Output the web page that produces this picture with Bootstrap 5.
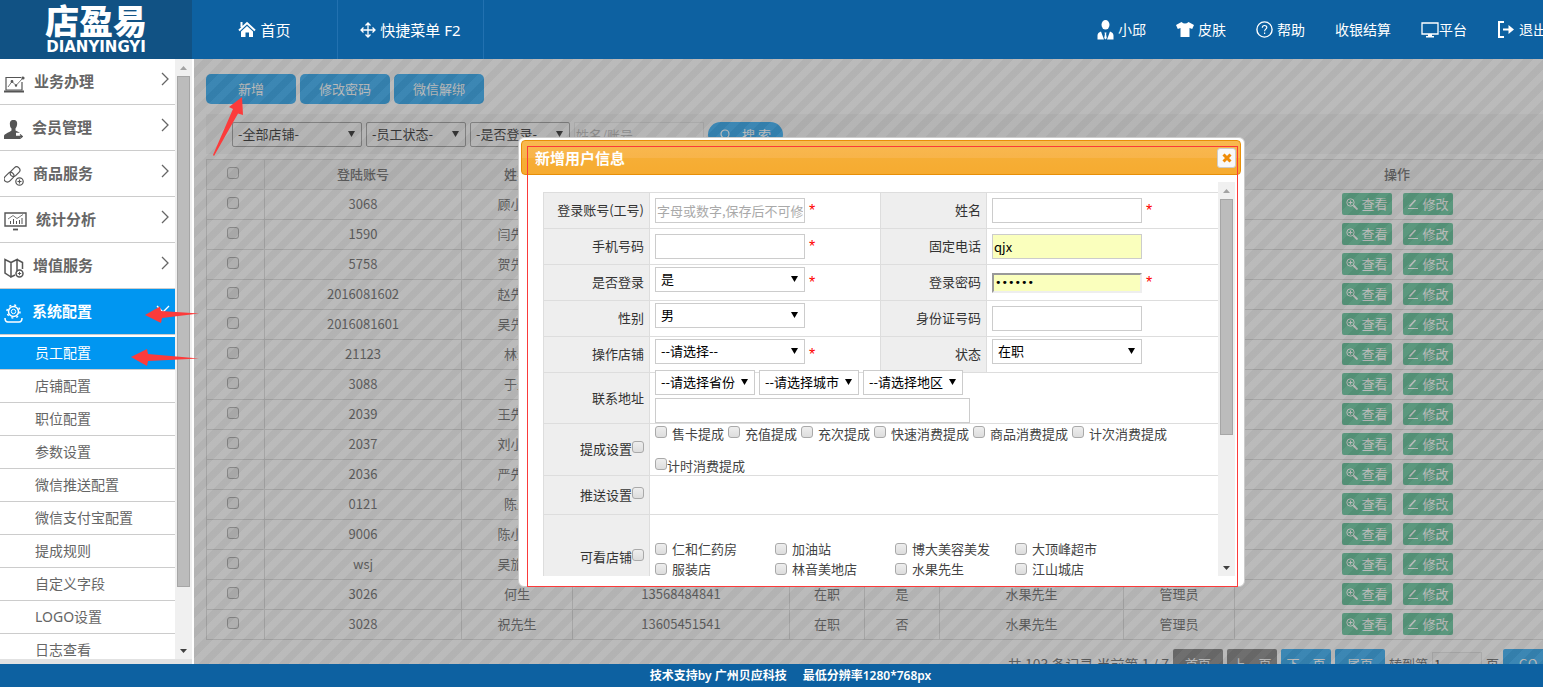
<!DOCTYPE html>
<html lang="zh-CN">
<head>
<meta charset="utf-8">
<meta name="viewport" content="width=device-width, initial-scale=1">
<title>店盈易 - 员工配置</title>
<link href="https://cdn.jsdelivr.net/npm/bootstrap@5.3.0/dist/css/bootstrap.min.css" rel="stylesheet">
<style>
  :root { --brand:#0d61a1; --bright:#0096f1; --line:#ddd; }
  body { font-family:"Noto Sans","Noto Sans CJK SC",sans-serif; font-size:13px; line-height:20px; color:#333; }
  .cjk, input, select, .btn { font-family:"Noto Sans CJK SC",sans-serif; }
  svg { display:block; flex:none; }

  /* header */
  .topbar { height:59px; background:var(--brand); }
  .logo { width:192px; background:#115284; line-height:1; }
  .logo-cn { font:900 34px/40px "Noto Sans CJK SC",sans-serif; }
  .logo-en { font:bold 15px/14px "DejaVu Sans",sans-serif; }
  .topbar a { color:#fff; text-decoration:none; white-space:nowrap; }
  .topnav a { width:146px; border-right:1px solid #2271b0; font-size:15px; }
  .toplinks { gap:30px; margin-right:-4px; font-size:14px; }

  /* sidebar */
  .side { width:194px; background:#e2e2e2; border-right:2px solid #fff; padding-bottom:5px; }
  .side-nav { background:#fff; }
  .side-nav a { color:#666; text-decoration:none; }
  .side-main { height:46px; border-bottom:1px solid #ccc; padding:0 5px 2px 4px; gap:9px; font-size:15px; font-weight:700; }
  .side-main .chev { margin-bottom:3px; }
  .side-main .ico { margin-top:6px; }
  .side-sub { height:33px; border-bottom:1px solid #ccc; padding-left:35px; font-size:14px; }
  .side-nav .on { background:var(--bright); color:#fff; }
  .side-main.on { margin-bottom:2px; }

  .sbar { width:17px; background:#f0f0f0; padding:0 2px; }
  .sbar i { display:block; height:17px; background:no-repeat center/7px 4px; }
  .sbar .up { background-image:url("data:image/svg+xml,%3Csvg xmlns='http://www.w3.org/2000/svg' viewBox='0 0 7 4'%3E%3Cpath d='M0 4L3.5 0 7 4z' fill='%23a3a3a3'/%3E%3C/svg%3E"); }
  .sbar .down { background-image:url("data:image/svg+xml,%3Csvg xmlns='http://www.w3.org/2000/svg' viewBox='0 0 7 4'%3E%3Cpath d='M0 0L3.5 4 7 0z' fill='%23404040'/%3E%3C/svg%3E"); margin-top:auto; }
  .sbar b { background:#bcbcbc; border:1px solid #a6a6a6; }

  /* list page */
  .page { padding:15px 0 0 12px; background:#fff; }
  .wide { width:calc(100% + 17px); }
  .tool { width:90px; height:30px; padding:0; background:var(--bright); color:#fff; font-size:13px; border:0; border-radius:5px; }
  .filters { background:#f2f2f2; height:40px; margin-top:10px; padding:8px 0 0 26px; }
  .field { height:25px; border:1px solid #ccc; border-radius:0; padding:0 1px; font-size:13px; line-height:20px; color:#000; background-color:#fff; width:150px; }
  .field::placeholder { color:#a9a9a9; opacity:1; }
  select.field { appearance:none; padding:0 5px 2px; background:#fff url("data:image/svg+xml,%3Csvg xmlns='http://www.w3.org/2000/svg' viewBox='0 0 7 6'%3E%3Cpath d='M0 0L3.5 6 7 0z'/%3E%3C/svg%3E") no-repeat right 6px top 8px/7px 6px; }
  .filters select.field { border-color:#888; border-radius:2px; background-color:transparent; }
  .filters input.field { background:#f6f6f6; border-color:#ddd; width:130px; }
  .field.w100 { width:100px; } .field.w130 { width:130px; } .field.w315 { width:315px; }
  .search { width:75px; height:25px; border:0; border-radius:13px; padding:0 12px; background:var(--bright); color:#fff; font-size:13px; }
  .staff { margin-top:5px; table-layout:fixed; border-collapse:collapse; text-align:center; color:#484848; }
  .staff th, .staff td { height:30px; padding:0 0 1px; border:1px solid #d4d4d4; font-weight:400; white-space:nowrap; }
  .staff th { background:#f2f2f2; font-weight:500; }
  .staff .pick { padding:0 6px 4px 0; line-height:12px; }
  .staff .c1 { width:58px; } .staff .c2 { width:197px; } .staff .c3, .staff .c8 { width:111px; }
  .staff .c4 { width:217px; } .staff .c5 { width:75px; } .staff .c7 { width:184px; }
  .op { width:50px; height:22px; background:#3fb984; color:#fff; border:0; border-radius:2px; padding:0 0 0 4px; font-size:13px; line-height:20px; }
  .pager { margin-top:9px; gap:4px; padding-right:7px; color:#484848; }
  .pager .total { font-size:14px; }
  .pager .btn { width:50px; height:30px; padding:0; border:0; border-radius:2px; font-size:13px; color:#fff; background:var(--bright); }
  .pager .btn.off { background:#666; }
  .pager .field { width:50px; height:25px; background:#f6f6f6; border-color:#ddd; }
  input[type=checkbox] { appearance:none; width:12px; height:12px; margin:0; border:1px solid #a9a9a9; border-radius:3px; background:linear-gradient(#eee,#ddd); flex:none; vertical-align:1px; }
  .staff input[type=checkbox] { border-color:#999; background:#e8e8e8; vertical-align:middle; }

  .shade { inset:0; background:linear-gradient(135deg,rgba(119,119,119,.5) 25%,rgba(103,103,103,.5) 25% 50%,rgba(119,119,119,.5) 50% 75%,rgba(103,103,103,.5) 75%) 0 0/20px 20px; z-index:2; }

  /* dialog */
  .dlg { left:324px; top:78px; width:727px; padding:2px; background:#fff; border:1px solid #ccc; border-radius:6px; z-index:3; }
  .dlg-title { height:35px; border:1px solid #e78f08; border-radius:4px; background:linear-gradient(#f9b94f,#f8b44a 50%,#f6ae36 52%,#f6ab30); padding:0 4px 0 13px; margin-right:1px; color:#fff; font-size:15px; font-weight:700; }
  .dlg-x { width:19px; height:20px; padding:0; border:1px solid #ccc; border-radius:3px; background:#f9f9f9; }
  .dlg-body { height:394px; margin:7px 7px 8px 22px; overflow:hidden; }
  .dlg-body > form { padding-top:10px; }
  .edit { table-layout:fixed; border-collapse:separate; border-spacing:0; border-top:1px solid var(--line); border-left:1px solid var(--line); width:100%; }
  .edit th { width:106px; background:#eee; border-right:1px solid var(--line); border-bottom:1px solid var(--line); font-weight:400; text-align:right; padding:0 5px 1px 0; white-space:nowrap; vertical-align:middle; }
  .edit td { height:36px; border-bottom:1px solid var(--line); padding:0 0 0 5px; vertical-align:middle; color:#444; }
  .edit th:first-child + td { width:230px; }
  .edit td + th { border-left:1px solid var(--line); width:107px; }
  .cell { gap:4px; }
  .cell select { margin-bottom:6px; }
  .star { color:#f00; font:16px/16px "Liberation Sans",sans-serif; }
  .filled { background-color:#faffbd; }
  .pwd { height:20px; border:2px solid #eee; border-top-color:#999; border-left-color:#999; font-family:"DejaVu Sans",sans-serif; font-size:11px; }
  .addr { margin-top:-3px; gap:3px; }
  .opts { gap:13px; line-height:19px; }
  .opts label, .shops label { gap:5px; }
  .opts input { margin-bottom:3px; }
  .opts .tight { gap:0; }
  .edit .t-push { height:39px; } .edit .t-shop { height:86px; vertical-align:top; padding-top:24px; }
  .shops { display:grid; grid-template-columns:repeat(4,120px); }

  .mark-box { left:527px; top:146px; width:711px; height:441px; border:1px solid #fb3a3a; z-index:4; pointer-events:none; }
  .arrows { left:0; top:0; z-index:5; pointer-events:none; }

  .foot { height:23px; background:var(--brand); color:#fff; font-size:12px; font-weight:600; gap:16px; padding-left:38px; }
</style>
</head>
<body class="vh-100 d-flex flex-column overflow-hidden position-relative">

<header class="topbar d-flex flex-shrink-0 overflow-hidden">
  <div class="logo d-flex flex-column align-items-center text-white flex-shrink-0">
    <div class="logo-cn">店盈易</div><div class="logo-en">DIANYINGYI</div>
  </div>
  <nav class="topnav d-flex">
    <a href="#" class="d-flex align-items-center justify-content-center gap-1"><svg width="18" height="17" viewBox="0 0 18 17"><path d="M1 9.500L9 2l8 7.500M3.500 1v5" fill="none" stroke="#fff" stroke-width="2"/><path d="M9 5l6 5.500V16h-4v-4.500H7.500V16H3v-5.500z" fill="#fff"/></svg>首页</a>
    <a href="#" class="d-flex align-items-center justify-content-center gap-1"><svg width="16" height="16" viewBox="0 0 16 16" fill="none" stroke="#fff" stroke-width="1.300"><path d="M8 1v14M1 8h14M5.500 3.500L8 1l2.500 2.500M5.500 12.500L8 15l2.500-2.500M3.500 5.500L1 8l2.500 2.500M12.500 5.500L15 8l-2.500 2.500"/></svg>快捷菜单 F2</a>
  </nav>
  <nav class="toplinks d-flex align-items-center ms-auto">
    <a href="#" class="d-flex align-items-center gap-1"><svg width="17" height="20" viewBox="0 0 17 20" fill="#fff"><ellipse cx="8.500" cy="4.800" rx="4" ry="4.800"/><path d="M4 11.500L7 19.500H.5V15.500C.5 13.500 1.800 12.200 4 11.500zM13 11.500L10 19.500h6.500V15.500c0-2-1.300-3.300-3.500-4zM7.500 12.500h2l-.4 1.500.7 4-1.300 1.500L7.200 18l.7-4z"/></svg>小邱</a>
    <a href="#" class="d-flex align-items-center gap-1"><svg width="18" height="15" viewBox="0 0 18 15" fill="#fff"><path d="M5.500 0Q9 3 12.500 0L18 3l-1.800 4L13.500 6v9h-9V6L1.800 7 0 3z"/></svg>皮肤</a>
    <a href="#" class="d-flex align-items-center gap-1"><svg width="17" height="17" viewBox="0 0 17 17" fill="none" stroke="#fff" stroke-width="1.400"><circle cx="8.500" cy="8.500" r="7.600"/><path d="M6.300 6.800c0-3 4.500-3 4.500-.3 0 1.600-2.200 1.800-2.200 3.700M8.600 11.600v1.400" stroke-width="1.200"/></svg>帮助</a>
    <a href="#">收银结算</a>
    <a href="#" class="d-flex align-items-center"><svg width="18" height="16" viewBox="0 0 18 16"><path d="M1 1h16v11H1z" fill="none" stroke="#fff" stroke-width="1.300"/><path d="M7 12h4v2h2v1.500H5V14h2z" fill="#fff"/></svg>平台</a>
    <a href="#" class="d-flex align-items-center gap-1"><svg width="18" height="19" viewBox="0 0 18 19" fill="none" stroke="#fff" stroke-width="2"><path d="M7 2H2v15h5M6 9.500h8"/><path d="M11.500 5v9l5.500-4.500z" fill="#fff" stroke="none"/></svg>退出</a>
  </nav>
</header>

<div class="d-flex flex-grow-1 overflow-hidden">
  <aside class="side d-flex flex-shrink-0">
    <nav class="side-nav flex-grow-1 overflow-hidden" id="menu">
      <a href="#" class="side-main d-flex align-items-center"><svg class="ico" width="21" height="18" viewBox="0 0 21 18" fill="none" stroke="#555" stroke-width="1.200"><path d="M17 2.500H2V15h16V7"/><path d="M0 16.500h20" stroke-width="2"/><path d="M4 12l4-5.500 4 4 6.500-7" stroke-width=".8"/><circle cx="8" cy="6.500" r=".8" fill="#555"/><circle cx="12" cy="10.500" r=".6" fill="#555"/><circle cx="19" cy="3" r="1" fill="#555"/></svg>业务办理</a>
      <a href="#" class="side-main d-flex align-items-center"><svg class="ico" width="19" height="19" viewBox="0 0 19 19" fill="#555"><path d="M9.500 0c3 0 4 2 3.600 4.500-.3 2.200-1 3-1.600 4v2l4.500 2.300h-4v3h4V19H0v-3c0-2 5-3.500 7.500-5.500v-2C6.500 7.500 6 6.500 5.900 4.500 5.700 2 6.500 0 9.500 0z"/><path d="M11 16.500h7M16 14.500l2.300 2-2.300 2" fill="none" stroke="#555" stroke-width="1.200"/></svg>会员管理</a>
      <a href="#" class="side-main d-flex align-items-center"><svg class="ico" width="20" height="20" viewBox="0 0 20 20" fill="none" stroke="#555" stroke-width="1.200"><rect x="5.500" y="2.500" width="11" height="6.500" rx="3.200" transform="rotate(-45 11 5.750)"/><rect x="-.5" y="8" width="11" height="6.500" rx="3.200" transform="rotate(-45 5 11.250)"/><circle cx="15.500" cy="15.500" r="3.700" fill="#fff"/><path d="M15.500 13.500v4M13.500 15.500h4"/></svg>商品服务</a>
      <a href="#" class="side-main d-flex align-items-center"><svg class="ico" width="23" height="19" viewBox="0 0 23 19" fill="none" stroke="#555"><path d="M1 1h21v13H1z" stroke-width="1.400"/><path d="M6.500 12V9M9.500 12V7M12.500 12V9M15.500 12V8M18 12V6" /><path d="M4 7l5-3.500 4 3 6-4" stroke-width=".8"/><path d="M9 17.500h5" stroke-width="1.800"/></svg>统计分析</a>
      <a href="#" class="side-main d-flex align-items-center"><svg class="ico" width="20" height="20" viewBox="0 0 20 20" fill="none" stroke="#555" stroke-width="1.500"><path d="M11 17l-4 2V4.500L1 1.500V15l6 4M7 4.500l6-3v12M13 1.500l5.500 3V11"/><circle cx="15.500" cy="15.500" r="3.500"/><path d="M15.500 13.800v3.400M13.800 15.500h3.400" stroke-width="1"/></svg>增值服务</a>
      <a href="#" class="side-main on d-flex align-items-center"><svg class="ico" width="19" height="19" viewBox="0 0 19 19" fill="none" stroke="#fff"><circle cx="9.500" cy="7.500" r="5" stroke-width="1.500"/><circle cx="9.500" cy="7.500" r="6.500" stroke-width="1.500" stroke-dasharray="2 3.100"/><circle cx="9.500" cy="7.500" r="2.200"/><path d="M1 14c0 3 1 4 3 4h11c2 0 3-1 3-4" stroke-width="1.500"/></svg>系统配置</a>
      <a href="#" class="side-sub on d-flex align-items-center">员工配置</a>
      <a href="#" class="side-sub d-flex align-items-center">店铺配置</a>
      <a href="#" class="side-sub d-flex align-items-center">职位配置</a>
      <a href="#" class="side-sub d-flex align-items-center">参数设置</a>
      <a href="#" class="side-sub d-flex align-items-center">微信推送配置</a>
      <a href="#" class="side-sub d-flex align-items-center">微信支付宝配置</a>
      <a href="#" class="side-sub d-flex align-items-center">提成规则</a>
      <a href="#" class="side-sub d-flex align-items-center">自定义字段</a>
      <a href="#" class="side-sub d-flex align-items-center">LOGO设置</a>
      <a href="#" class="side-sub d-flex align-items-center">日志查看</a>
    </nav>
    <div class="sbar d-flex flex-column"><i class="up"></i><b style="height:85.2%"></b><i class="down"></i></div>
  </aside>

  <main class="page flex-grow-1 position-relative overflow-hidden cjk">
    <div class="d-flex gap-1">
      <button class="btn tool" type="button">新增</button>
      <button class="btn tool" type="button">修改密码</button>
      <button class="btn tool" type="button">微信解绑</button>
    </div>
    <div class="filters wide d-flex gap-1">
      <select class="field w130" aria-label="店铺"><option>-全部店铺-</option></select>
      <select class="field w100" aria-label="员工状态"><option>-员工状态-</option></select>
      <select class="field w100" aria-label="是否登录"><option>-是否登录-</option></select>
      <input class="field" type="text" placeholder="姓名/账号" aria-label="姓名/账号">
      <button class="search d-flex align-items-center justify-content-between" type="button"><svg width="12" height="12" viewBox="0 0 12 12" fill="none" stroke="#fff" stroke-width="1.200"><circle cx="5" cy="5" r="4"/><path d="M8 8l3.500 3.500"/></svg><span>搜 索</span></button>
    </div>
    <table class="staff wide">
      <thead><tr><th class="c1 pick"><input type="checkbox" aria-label="全选"></th><th class="c2">登陆账号</th><th class="c3">姓名</th><th class="c4"></th><th class="c5"></th><th class="c5"></th><th class="c7"></th><th class="c8"></th><th>操作</th></tr></thead>
      <tbody id="rows"></tbody>
    </table>
    <div class="pager wide d-flex align-items-center justify-content-end">
      <span class="total text-nowrap">共 103 条记录 当前第 1 / 7</span>
      <button class="btn off" type="button">首页</button>
      <button class="btn off" type="button">上一页</button>
      <button class="btn" type="button">下一页</button>
      <button class="btn" type="button">尾页</button>
      <label for="pg">转到第</label><input id="pg" class="field" type="text" value="1"><span>页</span>
      <button class="btn" type="button">GO</button>
    </div>
    <div class="shade position-absolute"></div>

    <section class="dlg position-absolute" role="dialog" aria-labelledby="dt">
      <div class="dlg-title d-flex align-items-center justify-content-between"><span id="dt">新增用户信息</span>
        <button class="dlg-x d-flex align-items-center justify-content-center" type="button" aria-label="关闭"><svg width="10" height="10" viewBox="0 0 10 10"><path d="M1.500 1.500l7 7M8.500 1.500l-7 7" stroke="#ef8c08" stroke-width="3"/></svg></button>
      </div>
      <div class="dlg-body d-flex">
        <form class="flex-grow-1 overflow-hidden">
          <table class="edit">
            <tr><th><label for="f1">登录账号(工号)</label></th><td><div class="cell d-flex align-items-center"><input id="f1" class="field" placeholder="字母或数字,保存后不可修改"><span class="star">*</span></div></td>
              <th><label for="f2">姓名</label></th><td><div class="cell d-flex align-items-center"><input id="f2" class="field"><span class="star">*</span></div></td></tr>
            <tr><th><label for="f3">手机号码</label></th><td><div class="cell d-flex align-items-center"><input id="f3" class="field"><span class="star">*</span></div></td>
              <th><label for="f4">固定电话</label></th><td><div class="cell d-flex align-items-center"><input id="f4" class="field filled" value="qjx"></div></td></tr>
            <tr><th><label for="f5">是否登录</label></th><td><div class="cell d-flex align-items-center"><select id="f5" class="field"><option>是</option></select><span class="star">*</span></div></td>
              <th><label for="f6">登录密码</label></th><td><div class="cell d-flex align-items-center"><input id="f6" type="password" class="field filled pwd" value="123456"><span class="star">*</span></div></td></tr>
            <tr><th><label for="f7">性别</label></th><td><div class="cell d-flex align-items-center"><select id="f7" class="field"><option>男</option></select></div></td>
              <th><label for="f8">身份证号码</label></th><td><div class="cell d-flex align-items-center"><input id="f8" class="field"></div></td></tr>
            <tr><th><label for="f9">操作店铺</label></th><td><div class="cell d-flex align-items-center"><select id="f9" class="field"><option>--请选择--</option></select><span class="star">*</span></div></td>
              <th><label for="f10">状态</label></th><td><div class="cell d-flex align-items-center"><select id="f10" class="field"><option>在职</option></select></div></td></tr>
            <tr><th><label for="f11">联系地址</label></th><td colspan="3"><div class="addr d-flex flex-column">
              <div class="d-flex gap-1"><select class="field w100" aria-label="省份"><option>--请选择省份</option></select><select class="field w100" aria-label="城市"><option>--请选择城市</option></select><select class="field w100" aria-label="地区"><option>--请选择地区</option></select></div>
              <input id="f11" class="field w315"></div></td></tr>
            <tr><th><label>提成设置<input type="checkbox"></label></th><td colspan="3"><div class="opts d-flex flex-column">
              <div class="d-flex gap-1"><label class="d-flex align-items-center"><input type="checkbox">售卡提成</label><label class="d-flex align-items-center"><input type="checkbox">充值提成</label><label class="d-flex align-items-center"><input type="checkbox">充次提成</label><label class="d-flex align-items-center"><input type="checkbox">快速消费提成</label><label class="d-flex align-items-center"><input type="checkbox">商品消费提成</label><label class="d-flex align-items-center"><input type="checkbox">计次消费提成</label></div>
              <label class="tight d-flex align-items-center"><input type="checkbox">计时消费提成</label></div></td></tr>
            <tr><th><label>推送设置<input type="checkbox"></label></th><td colspan="3" class="t-push"></td></tr>
            <tr><th><label>可看店铺<input type="checkbox"></label></th><td colspan="3" class="t-shop"><div class="shops">
              <label class="d-flex align-items-center"><input type="checkbox">仁和仁药房</label><label class="d-flex align-items-center"><input type="checkbox">加油站</label><label class="d-flex align-items-center"><input type="checkbox">博大美容美发</label><label class="d-flex align-items-center"><input type="checkbox">大顶峰超市</label>
              <label class="d-flex align-items-center"><input type="checkbox">服装店</label><label class="d-flex align-items-center"><input type="checkbox">林音美地店</label><label class="d-flex align-items-center"><input type="checkbox">水果先生</label><label class="d-flex align-items-center"><input type="checkbox">江山城店</label></div></td></tr>
          </table>
        </form>
        <div class="sbar d-flex flex-column flex-shrink-0"><i class="up"></i><b style="height:60%"></b><i class="down"></i></div>
      </div>
    </section>
  </main>
</div>

<footer class="foot d-flex flex-shrink-0 align-items-center justify-content-center"><span>技术支持by 广州贝应科技</span><span>最低分辨率1280*768px</span></footer>

<div class="mark-box position-absolute"></div>
<svg class="arrows position-absolute" width="260" height="380" fill="#fc3b3b"><path d="M242 97L243 115 238 113.500 214 156 213 155 233 109 229 107z"/><path d="M145 315L160 306.500 161 311 199 313.500 162 318 161 323z"/><path d="M131 357L147 349 148 354 199 358.500 148 361 147 366z"/></svg>

<script src="https://cdn.jsdelivr.net/npm/bootstrap@5.3.0/dist/js/bootstrap.bundle.min.js"></script>
<script>
  // account, name, phone, status, can log in, shop, role
  const staff = [["3068","顾小姐"],["1590","闫先生"],["5758","贺先生"],["2016081602","赵先生"],["2016081601","吴先生"],["21123","林生"],["3088","于生"],["2039","王先生"],["2037","刘小姐"],["2036","严先生"],["0121","陈生"],["9006","陈小姐"],["wsj","吴旅生"],
    ["3026","何生","13568484841","在职","是","水果先生","管理员"],["3028","祝先生","13605451541","在职","否","水果先生","管理员"]];
  const zoomIcon = '<svg width="12" height="12" viewBox="0 0 12 12" fill="none" stroke="#fff"><circle cx="4.500" cy="4.500" r="3.700"/><path d="M2.500 4.500h4M4.500 2.500v4"/><path d="M7.500 7.500l4 4" stroke-width="1.800"/></svg>';
  const penIcon = '<svg width="12" height="12" viewBox="0 0 12 12" fill="none" stroke="#fff"><path d="M1 10.500h10"/><path d="M2.500 8.500L8.500 2" stroke-width="1.600"/></svg>';
  document.getElementById('rows').innerHTML = staff.map(r => {
    const cells = Array.from({length:7}, (_, i) => `<td>${r[i] || ''}</td>`).join('');
    return `<tr><td class="pick"><input type="checkbox" aria-label="选择 ${r[0]}"></td>${cells}<td><div class="d-flex justify-content-center" style="gap:11px"><button type="button" class="op d-flex align-items-center gap-1">${zoomIcon}查看</button><button type="button" class="op d-flex align-items-center gap-1">${penIcon}修改</button></div></td></tr>`;
  }).join('');
  document.querySelectorAll('.side-main').forEach(a => {
    const d = a.classList.contains('on') ? 'M1 4l6 6 6-6' : 'M6 1l6 6-6 6';
    a.insertAdjacentHTML('beforeend', `<svg class="chev ms-auto" width="14" height="14" viewBox="0 0 14 14" fill="none" stroke="currentColor" stroke-width="1.300"><path d="${d}"/></svg>`);
  });
</script>
</body>
</html>
